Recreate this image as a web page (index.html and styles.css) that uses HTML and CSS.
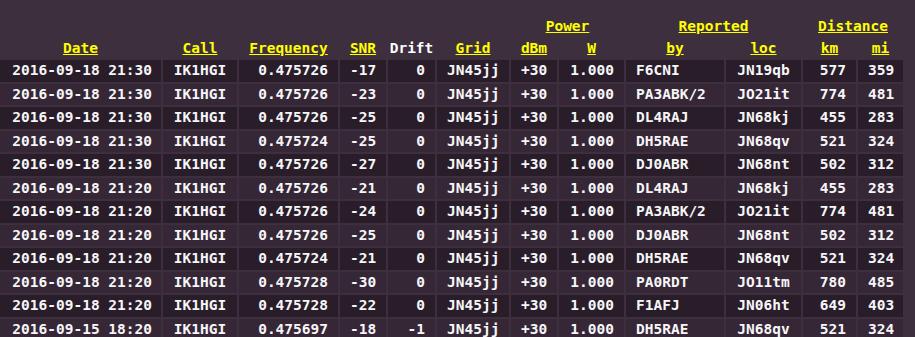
FILE: index.html
```html
<!DOCTYPE html>
<html>
<head>
<meta charset="utf-8">
<link rel="stylesheet" href="styles.css">
</head>
<body>
<table class="spots">
  <colgroup>
    <col class="c-date"><col class="c-call"><col class="c-freq"><col class="c-snr"><col class="c-drift"><col class="c-grid"><col class="c-dbm"><col class="c-w"><col class="c-by"><col class="c-loc"><col class="c-km"><col class="c-mi">
  </colgroup>
  <thead>
    <tr>
      <th colspan="6"></th>
      <th colspan="2"><a href="#">Power</a></th>
      <th colspan="2"><a href="#">Reported</a></th>
      <th colspan="2"><a href="#">Distance</a></th>
    </tr>
    <tr>
      <th><a href="#">Date</a></th>
      <th><a href="#">Call</a></th>
      <th><a href="#">Frequency</a></th>
      <th><a href="#">SNR</a></th>
      <th class="plain">Drift</th>
      <th><a href="#">Grid</a></th>
      <th><a href="#">dBm</a></th>
      <th><a href="#">W</a></th>
      <th><a href="#">by</a></th>
      <th><a href="#">loc</a></th>
      <th><a href="#">km</a></th>
      <th><a href="#">mi</a></th>
    </tr>
  </thead>
  <tbody>
    <tr><td class="date">2016-09-18 21:30</td><td class="center">IK1HGI</td><td class="right">0.475726</td><td class="right">-17</td><td class="right">0</td><td class="center">JN45jj</td><td class="right">+30</td><td class="right">1.000</td><td class="left">F6CNI</td><td class="center">JN19qb</td><td class="right">577</td><td class="right">359</td></tr>
    <tr><td class="date">2016-09-18 21:30</td><td class="center">IK1HGI</td><td class="right">0.475726</td><td class="right">-23</td><td class="right">0</td><td class="center">JN45jj</td><td class="right">+30</td><td class="right">1.000</td><td class="left">PA3ABK/2</td><td class="center">JO21it</td><td class="right">774</td><td class="right">481</td></tr>
    <tr><td class="date">2016-09-18 21:30</td><td class="center">IK1HGI</td><td class="right">0.475726</td><td class="right">-25</td><td class="right">0</td><td class="center">JN45jj</td><td class="right">+30</td><td class="right">1.000</td><td class="left">DL4RAJ</td><td class="center">JN68kj</td><td class="right">455</td><td class="right">283</td></tr>
    <tr><td class="date">2016-09-18 21:30</td><td class="center">IK1HGI</td><td class="right">0.475724</td><td class="right">-25</td><td class="right">0</td><td class="center">JN45jj</td><td class="right">+30</td><td class="right">1.000</td><td class="left">DH5RAE</td><td class="center">JN68qv</td><td class="right">521</td><td class="right">324</td></tr>
    <tr><td class="date">2016-09-18 21:30</td><td class="center">IK1HGI</td><td class="right">0.475726</td><td class="right">-27</td><td class="right">0</td><td class="center">JN45jj</td><td class="right">+30</td><td class="right">1.000</td><td class="left">DJ0ABR</td><td class="center">JN68nt</td><td class="right">502</td><td class="right">312</td></tr>
    <tr><td class="date">2016-09-18 21:20</td><td class="center">IK1HGI</td><td class="right">0.475726</td><td class="right">-21</td><td class="right">0</td><td class="center">JN45jj</td><td class="right">+30</td><td class="right">1.000</td><td class="left">DL4RAJ</td><td class="center">JN68kj</td><td class="right">455</td><td class="right">283</td></tr>
    <tr><td class="date">2016-09-18 21:20</td><td class="center">IK1HGI</td><td class="right">0.475726</td><td class="right">-24</td><td class="right">0</td><td class="center">JN45jj</td><td class="right">+30</td><td class="right">1.000</td><td class="left">PA3ABK/2</td><td class="center">JO21it</td><td class="right">774</td><td class="right">481</td></tr>
    <tr><td class="date">2016-09-18 21:20</td><td class="center">IK1HGI</td><td class="right">0.475726</td><td class="right">-25</td><td class="right">0</td><td class="center">JN45jj</td><td class="right">+30</td><td class="right">1.000</td><td class="left">DJ0ABR</td><td class="center">JN68nt</td><td class="right">502</td><td class="right">312</td></tr>
    <tr><td class="date">2016-09-18 21:20</td><td class="center">IK1HGI</td><td class="right">0.475724</td><td class="right">-21</td><td class="right">0</td><td class="center">JN45jj</td><td class="right">+30</td><td class="right">1.000</td><td class="left">DH5RAE</td><td class="center">JN68qv</td><td class="right">521</td><td class="right">324</td></tr>
    <tr><td class="date">2016-09-18 21:20</td><td class="center">IK1HGI</td><td class="right">0.475728</td><td class="right">-30</td><td class="right">0</td><td class="center">JN45jj</td><td class="right">+30</td><td class="right">1.000</td><td class="left">PA0RDT</td><td class="center">JO11tm</td><td class="right">780</td><td class="right">485</td></tr>
    <tr><td class="date">2016-09-18 21:20</td><td class="center">IK1HGI</td><td class="right">0.475728</td><td class="right">-22</td><td class="right">0</td><td class="center">JN45jj</td><td class="right">+30</td><td class="right">1.000</td><td class="left">F1AFJ</td><td class="center">JN06ht</td><td class="right">649</td><td class="right">403</td></tr>
    <tr><td class="date">2016-09-15 18:20</td><td class="center">IK1HGI</td><td class="right">0.475697</td><td class="right">-18</td><td class="right">-1</td><td class="center">JN45jj</td><td class="right">+30</td><td class="right">1.000</td><td class="left">DH5RAE</td><td class="center">JN68qv</td><td class="right">521</td><td class="right">324</td></tr>
  </tbody>
</table>
</body>
</html>
```
FILE: styles.css
```css
html, body {
  margin: 0;
  padding: 0;
  background: #3e2f3e;
  overflow: hidden;
}

.spots {
  font-family: "DejaVu Sans Mono", "Liberation Mono", monospace;
  font-weight: bold;
  font-size: 14.5px;
  color: #f6f6f8;
  border-collapse: separate;
  border-spacing: 2px;
  table-layout: fixed;
  width: 907px;
  margin: 15px 0 0 -2px;
}

.c-date { width: 161px; }
.c-call { width: 74px; }
.c-freq { width: 99px; }
.c-snr { width: 46px; }
.c-drift { width: 47px; }
.c-grid { width: 72px; }
.c-dbm { width: 46px; }
.c-w { width: 65px; }
.c-by { width: 98px; }
.c-loc { width: 75px; }
.c-km { width: 53px; }
.c-mi { width: 45px; }

.spots th {
  padding: 0;
  line-height: 19.5px;
  text-align: center;
  white-space: nowrap;
}

.spots th a {
  color: #ffff00;
  text-decoration: underline;
}

.spots th.plain {
  color: #ffffff;
}

.spots td {
  padding: 1px 10px;
  line-height: 19.5px;
  white-space: nowrap;
  overflow: hidden;
}

.spots tbody tr:nth-child(odd) td {
  background: #2a1d2a;
}

.spots tbody tr:nth-child(even) td {
  background: #362736;
}

.spots td.date { text-align: right; padding-right: 9px; }
.spots td.center { text-align: center; }
.spots td.right { text-align: right; }
.spots td.left { text-align: left; }
```
